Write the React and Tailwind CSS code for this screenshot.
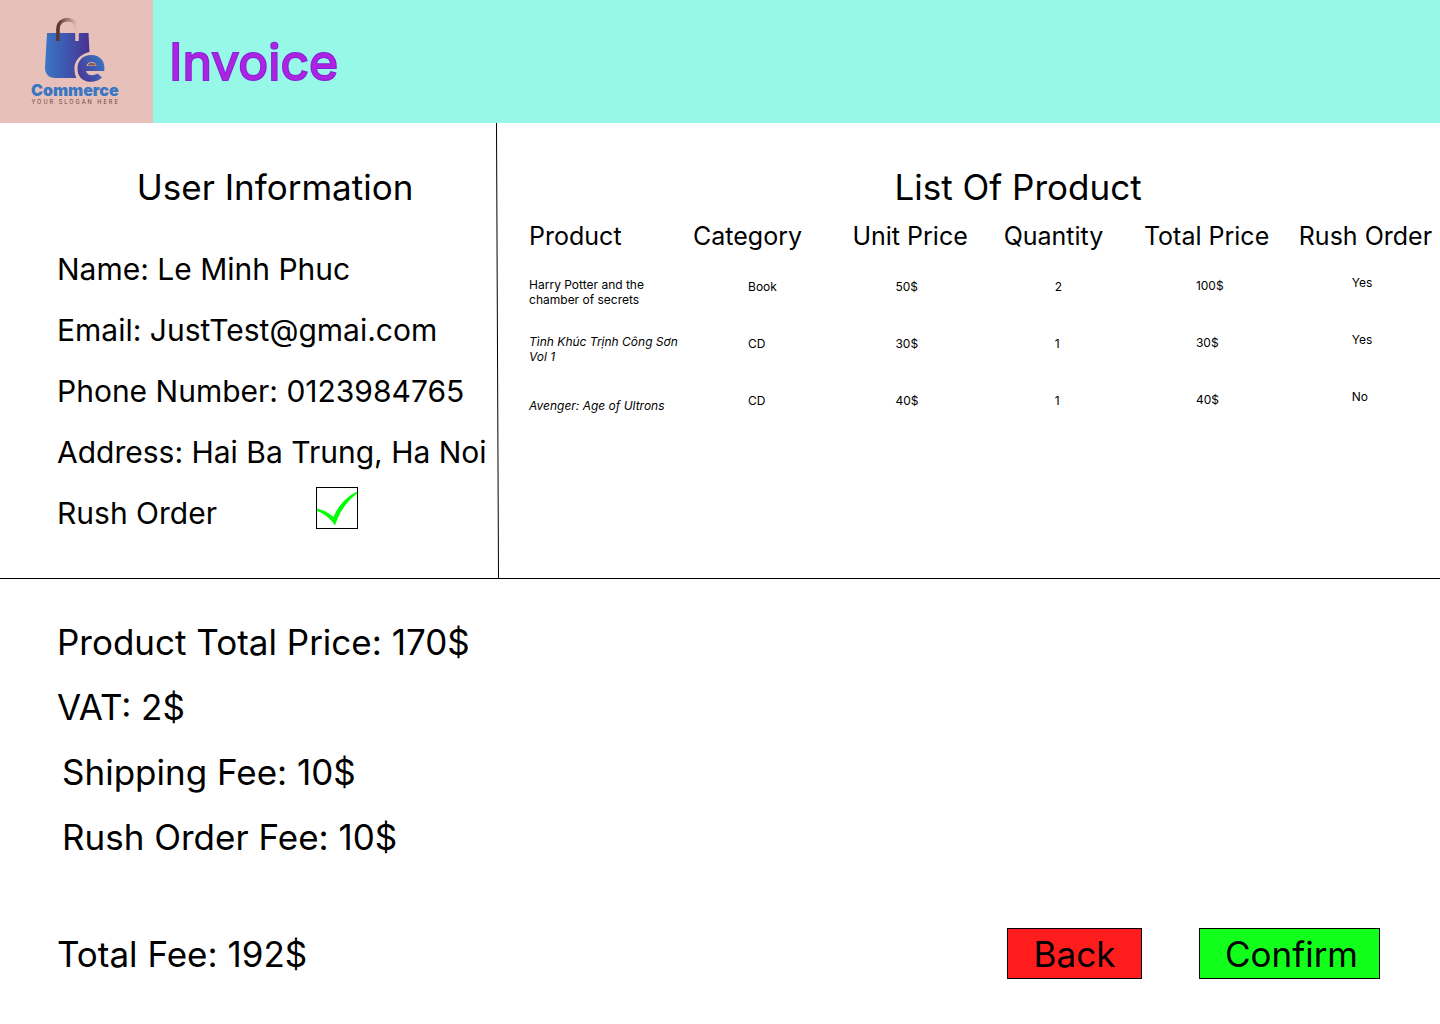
import React from "react";

const details = [
  "Name: Le Minh Phuc",
  "Email: JustTest@gmai.com",
  "Phone Number: 0123984765",
  "Address: Hai Ba Trung, Ha Noi",
];

const products = [
  { name: "Harry Potter and the chamber of secrets", category: "Book", unit: "50$", quantity: "2", total: "100$", rush: "Yes" },
  { name: "Tình Khúc Trịnh Công Sơn Vol 1", category: "CD", unit: "30$", quantity: "1", total: "30$", rush: "Yes", italic: true },
  { name: "Avenger: Age of Ultrons", category: "CD", unit: "40$", quantity: "1", total: "40$", rush: "No", italic: true },
];

function Logo() {
  return (
    <svg viewBox="0 0 153 123" className="h-[123px] w-[153px] shrink-0 bg-[#e6c0b9]" role="img" aria-label="Commerce logo">
      <defs>
        <linearGradient id="bag" x1="0" x2="1" y1="0" y2="0">
          <stop offset="0" stopColor="#3b76c4" />
          <stop offset="0.5" stopColor="#3e55ae" />
          <stop offset="1" stopColor="#4b3190" />
        </linearGradient>
        <linearGradient id="letter" x1="1" x2="0" y1="0.2" y2="0.8">
          <stop offset="0" stopColor="#3875c4" />
          <stop offset="1" stopColor="#4b3593" />
        </linearGradient>
        <linearGradient id="handle" x1="0" x2="1" y1="0" y2="0">
          <stop offset="0" stopColor="#55342f" />
          <stop offset="0.45" stopColor="#9b746d" />
          <stop offset="1" stopColor="#e6c0b9" />
        </linearGradient>
      </defs>
      <path d="M47 33H88.500L89.500 52C80 54 74 61 74.500 69C74.500 73 75 75.500 76.500 78H55C49 78 45 74 45 68Z" fill="url(#bag)" />
      <path d="M77 41V32" stroke="#e6c0b9" strokeWidth="3.500" />
      <path d="M58 41V29C58 16.500 77 16.500 77 29V34" fill="none" stroke="url(#handle)" strokeWidth="3.600" />
      <path fillRule="evenodd" d="M104.300 71H86C87 75.500 93 76.500 97.500 73.500L102 77.500C95 84.500 77.500 84 77.500 68.500C77.500 60 83.500 55 91 55C100 55 105.500 61 104.300 71ZM86.500 66H96.500C96 60.500 87.500 60.500 86.500 66Z" fill="url(#letter)" />
      <path d="M87.500 65.500C88.500 61.800 95 61.800 96 65.500Z" fill="#80574f" />
      <text x="31" y="96" fontFamily="Inter, sans-serif" fontSize="16" fontWeight="900" fill="#3976c3">Commerce</text>
      <text x="31.500" y="103.500" fontFamily="Inter, sans-serif" fontSize="5.600" letterSpacing="2" fill="#654039">YOUR SLOGAN HERE</text>
    </svg>
  );
}

export default function App() {
  return (
    <div className="flex min-h-screen flex-col bg-white font-['Inter',sans-serif] text-black">
      <header className="flex items-center bg-[#97f8e7]">
        <Logo />
        <h1 className="pl-4 text-[50px] leading-[64px] text-[#ac23e0] [paint-order:stroke_fill] [-webkit-text-stroke:2px_#8420df]">Invoice</h1>
      </header>

      <main className="flex flex-1 flex-col">
        <div className="flex min-h-[456px] border-b border-black">
          <section className="w-[34.45%] shrink-0 pt-[42px]">
            <h2 className="pl-[54px] text-center text-[35px] leading-[44px]">User Information</h2>
            <div className="mt-[42px] flex flex-col gap-[25px] pl-[57px] text-[30px] leading-9 whitespace-nowrap">
              {details.map((line) => (
                <p key={line}>{line}</p>
              ))}
              <div className="flex items-end">
                <label htmlFor="rush" className="w-[259px]">Rush Order</label>
                <span className="relative -mt-2 mb-0.5 block size-[42px]">
                  <input id="rush" type="checkbox" defaultChecked className="peer block size-full appearance-none border border-black" />
                  <svg viewBox="0 0 42 42" className="pointer-events-none absolute inset-0 hidden size-full peer-checked:block" aria-hidden="true">
                    <path d="M1 21.500C8 23 13 26 17.500 30C22 19 30 10 41 4.500V6.500C30 15 23 26 19 38.500C14 31 8 26.500 1 24Z" fill="#00ff00" />
                  </svg>
                </span>
              </div>
            </div>
          </section>

          <svg viewBox="0 0 3 455" preserveAspectRatio="none" className="w-[3px] shrink-0 self-stretch" aria-hidden="true">
            <path d="M0.500 0L2.500 455" stroke="#000" />
          </svg>

          <section className="min-w-0 flex-1 pt-[42px] pl-[30px]">
            <h2 className="pl-[67px] text-center text-[35px] leading-[44px]">List Of Product</h2>
            <table className="w-full table-fixed text-left">
              <colgroup>
                <col className="w-[18%]" />
                <col className="w-[17.5%]" />
                <col className="w-[16.6%]" />
                <col className="w-[15.4%]" />
                <col className="w-[17%]" />
                <col />
              </colgroup>
              <thead className="text-[25px] leading-[30px] whitespace-nowrap">
                <tr className="h-[54px] *:p-0 *:font-normal">
                  <th>Product</th>
                  <th>Category</th>
                  <th>Unit Price</th>
                  <th>Quantity</th>
                  <th>Total Price</th>
                  <th>Rush Order</th>
                </tr>
              </thead>
              <tbody className="text-[12px] leading-[15px]">
                {products.map((p) => (
                  <tr key={p.name} className="h-[57px]">
                    <td className={p.italic ? "p-0 pr-3 italic" : "p-0 pr-8"}>{p.name}</td>
                    <td className="pb-2.5 pl-[55px]">{p.category}</td>
                    <td className="pb-2.5 pl-[43px]">{p.unit}</td>
                    <td className="pb-2.5 pl-[51px]">{p.quantity}</td>
                    <td className="pb-3 pl-[52px]">{p.total}</td>
                    <td className="pb-[18px] pl-[53px]">{p.rush}</td>
                  </tr>
                ))}
              </tbody>
            </table>
          </section>
        </div>

        <section className="flex flex-1 flex-col px-[57px] pt-[41px] pb-[45px] text-[35px] leading-[44px]">
          <div className="flex flex-col gap-[21px]">
            <p>Product Total Price: 170$</p>
            <p>VAT: 2$</p>
            <p className="pl-[5px]">Shipping Fee: 10$</p>
            <p className="pl-[5px]">Rush Order Fee: 10$</p>
          </div>
          <div className="mt-auto flex items-center justify-between">
            <p>Total Fee: 192$</p>
            <div className="flex gap-[57px]">
              <button type="button" className="h-[51px] w-[135px] border border-black bg-[#ff1c1c]">Back</button>
              <button type="button" className="mr-[3px] h-[51px] w-[181px] border border-black bg-[#12ff1c] pl-1">Confirm</button>
            </div>
          </div>
        </section>
      </main>
    </div>
  );
}
